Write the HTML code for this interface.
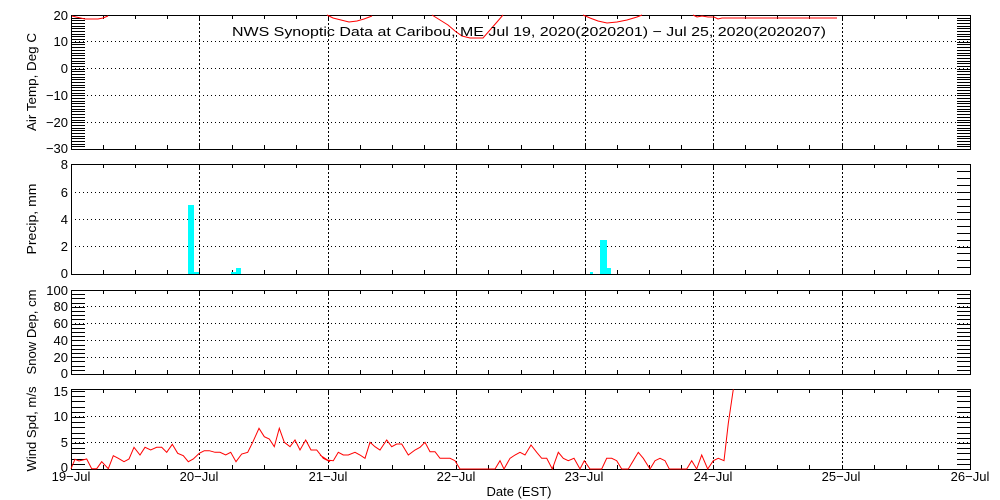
<!DOCTYPE html>
<html><head><meta charset="utf-8"><style>
html,body{margin:0;padding:0;background:#fff;}
svg{display:block;font-family:"Liberation Sans",sans-serif;}
text{font-size:13px;fill:#000;}
</style></head><body>
<svg id="s" width="1000" height="500" viewBox="0 0 1000 500" xmlns="http://www.w3.org/2000/svg">
<g id="g" shape-rendering="crispEdges"></g>
<g id="data"></g>
<text x="232" y="36" textLength="594" lengthAdjust="spacingAndGlyphs">NWS Synoptic Data at Caribou, ME   Jul 19, 2020(2020201) − Jul 25, 2020(2020207)</text>
<g text-anchor="end">
<text x="68" y="20">20</text><text x="68" y="46">10</text><text x="68" y="73">0</text><text x="68" y="100">−10</text><text x="68" y="127">−20</text><text x="68" y="153">−30</text>
<text x="68" y="169">8</text><text x="68" y="197">6</text><text x="68" y="224">4</text><text x="68" y="251">2</text><text x="68" y="278">0</text>
<text x="68" y="295">100</text><text x="68" y="311">80</text><text x="68" y="328">60</text><text x="68" y="345">40</text><text x="68" y="362">20</text><text x="68" y="378">0</text>
<text x="68" y="396">15</text><text x="68" y="421">10</text><text x="68" y="447">5</text><text x="68" y="472">0</text>
</g>
<g text-anchor="middle">
<text x="71" y="481">19−Jul</text><text x="199" y="481">20−Jul</text><text x="328" y="481">21−Jul</text><text x="456" y="481">22−Jul</text><text x="584" y="481">23−Jul</text><text x="713" y="481">24−Jul</text><text x="841" y="481">25−Jul</text><text x="970" y="481">26−Jul</text>
<text x="519" y="496">Date (EST)</text>
<text transform="translate(36,82) rotate(-90)" textLength="98" lengthAdjust="spacingAndGlyphs">Air Temp, Deg C</text>
<text transform="translate(36,219) rotate(-90)" textLength="71" lengthAdjust="spacingAndGlyphs">Precip, mm</text>
<text transform="translate(36,332) rotate(-90)" textLength="85" lengthAdjust="spacingAndGlyphs">Snow Dep, cm</text>
<text transform="translate(36,429) rotate(-90)" textLength="85" lengthAdjust="spacingAndGlyphs">Wind Spd, m/s</text>
</g>
</svg>
<script>
var NS="http://www.w3.org/2000/svg",g=document.getElementById('g'),d=document.getElementById('data');
function el(p,t,a){var e=document.createElementNS(NS,t);for(var k in a)e.setAttribute(k,a[k]);p.appendChild(e);return e;}
function ln(x1,y1,x2,y2,ex){var a={x1:x1,y1:y1,x2:x2,y2:y2,stroke:'#000','stroke-width':1};for(var k in ex)a[k]=ex[k];el(g,'line',a);}
var L=71,R=970,day=(R-L)/7;
var panels=[
 {t:15,b:149,maj:[41,68,95,122],minorL:2.68,minorR:2.68},
 {t:164,b:274,maj:[192,219,246],minorL:0,minorR:6.85},
 {t:290,b:374,maj:[306,323,340,357],minorL:4.2,minorR:4.2},
 {t:389,b:469,maj:[416,442],minorL:5.2,minorR:5.2}
];
panels.forEach(function(p){
 el(g,'rect',{x:L+.5,y:p.t+.5,width:R-L,height:p.b-p.t,fill:'none',stroke:'#000','stroke-width':1});
 for(var i=1;i<7;i++){var x=Math.round(L+i*day)+.5;ln(x,p.t,x,p.b,{'stroke-dasharray':'2,2'});}
 p.maj.forEach(function(y){ln(L,y+.5,R,y+.5,{'stroke-dasharray':'1,3'});});
 for(var i=0;i<28;i++){var x=Math.round(L+i*day/4)+.5;ln(x,p.t,x,p.t+4);ln(x,p.b-4,x,p.b);}
 if(p.minorL)for(var y=p.b;y>p.t;y-=p.minorL){var yy=Math.round(y)+.5;ln(L,yy,L+14,yy);}
 if(p.minorR)for(var y=p.b;y>p.t;y-=p.minorR){var yy=Math.round(y)+.5;ln(R-13,yy,R,yy);}
});
function pl(pts,col){el(d,'polyline',{points:pts.map(function(q){return q.join(',')}).join(' '),fill:'none',stroke:col,'stroke-width':1});}
pl([[72,16],[76,17],[85,19],[98,19],[103,18],[108,16]],'red');
pl([[327,15],[333,18],[341,20],[349,22],[357,21],[364,19],[372,16]],'red');
pl([[432,15],[440,20],[448,25],[455,31],[462,36],[470,38],[483,38],[490,30],[497,22],[503,15]],'red');
pl([[583,15],[590,18],[598,21],[607,23],[617,22],[627,20],[637,17],[642,15]],'red');
pl([[693,15],[697,17],[702,16],[708,17],[714,17],[718,19],[722,18],[837,18]],'red');
[[188,194,205],[194,199,272],[231,236,272],[236,241,268],[590,593,272],[600,607,240],[607,611,268]].forEach(function(b){el(d,'rect',{x:b[0],y:b[2],width:b[1]-b[0],height:274-b[2],fill:'#00ffff'});});
var w1=[[213,566],[225,538],[237,543],[248,540],[260,537],[275,566],[290,566],[305,545],[325,566],[340,527],[355,535],[372,545],[387,537],[402,502],[420,525],[435,502],[452,510],[470,502],[485,502],[500,517],[517,493],[533,520],[550,527],[565,545],[580,537],[598,520],[613,512],[628,512],[645,517],[660,517],[677,525],[692,517],[708,545],[725,522],[743,517],[758,487],[777,445],[793,470],[808,477],[823,500],[838,445],[853,487],[870,500],[885,480],[900,510],[917,480],[933,510],[950,510],[970,535],[990,545]].map(function(q){return [(q[0]/3).toFixed(1),(280+q[1]/3).toFixed(1)];});
var w2=[[0,225],[20,240],[40,242],[55,217],[70,225],[85,225],[105,217],[120,225],[135,235],[150,187],[165,200],[180,210],[200,180],[215,200],[230,192],[245,192],[265,225],[285,210],[300,202],[315,187],[330,215],[345,215],[360,235],[390,235],[405,242],[420,267],[525,267],[540,242],[552,267],[570,235],[585,225],[600,217],[615,225],[633,195],[650,217],[665,235],[680,235],[697,267],[715,217],[730,235],[745,242],[762,235],[780,267],[793,242],[810,267],[845,267],[860,235],[875,235],[890,242],[905,267],[925,267],[955,217],[970,235],[990,267],[1005,242],[1020,235],[1035,242],[1048,267],[1100,267],[1115,242],[1130,267],[1145,225],[1163,267],[1180,242],[1195,235],[1212,242],[1225,130],[1240,28]].map(function(q){return [(320+q[0]/3).toFixed(1),(380+q[1]/3).toFixed(1)];});
pl(w1.concat(w2),'red');
</script>
</body></html>
